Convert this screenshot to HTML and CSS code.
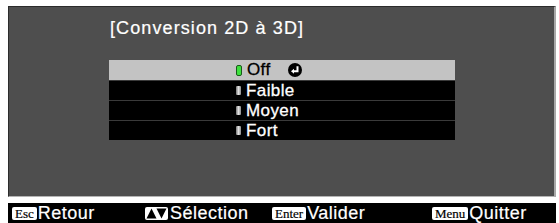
FILE: index.html
```html
<!DOCTYPE html>
<html lang="fr">
<head>
    <meta charset="UTF-8">
    <meta name="viewport" content="width=device-width, initial-scale=1.0">
    <title>Conversion 2D à 3D</title>
    <link rel="stylesheet" href="styles.css">
</head>
<body>
    <div class="screen">
        <div class="panel">
            <h1 class="title">[Conversion 2D à 3D]</h1>
            <ul class="menu">
                <li class="item selected">
                    <span class="led on"></span>Off
                    <svg class="enter-icon" width="14" height="14" viewBox="0 0 14 14">
                        <circle cx="7" cy="7" r="7" fill="#000"/>
                        <path d="M9.5 3.2 V8.3 H5.2" fill="none" stroke="#fff" stroke-width="2"/>
                        <path d="M3 8.3 L6 5.8 V10.8 Z" fill="#fff"/>
                    </svg>
                </li>
                <li class="item"><span class="led"></span>Faible</li>
                <li class="item"><span class="led"></span>Moyen</li>
                <li class="item"><span class="led"></span>Fort</li>
            </ul>
        </div>

        <div class="help-bar">
            <div class="help"><span class="key">Esc</span>Retour</div>
            <div class="help">
                <svg class="key-arrows" width="23" height="13" viewBox="0 0 23 13">
                    <rect width="23" height="13" rx="2" fill="#fff"/>
                    <path d="M1.5 11.5 L6.5 1.5 L11.5 11.5 Z" fill="#000"/>
                    <path d="M11.5 1.5 L21.5 1.5 L16.5 11.5 Z" fill="#000"/>
                </svg>Sélection
            </div>
            <div class="help"><span class="key">Enter</span>Valider</div>
            <div class="help"><span class="key">Menu</span>Quitter</div>
        </div>
    </div>
</body>
</html>
```

FILE: styles.css
```css
body {
    margin: 0;
    background: #fff;
    font-family: "Liberation Sans", Arial, sans-serif;
}

.screen {
    width: 548px;
    padding: 6px 0 0 8px;
}

.panel {
    height: 191px;
    box-sizing: border-box;
    background: #4e4e4e;
    border-top: 1px solid #2c2c2c;
    border-left: 1px solid #2c2c2c;
    border-right: 2px solid #a8a8a8;
    border-bottom: 1px solid #b4b4b4;
    padding: 11px 0 0 101px;
}

.title {
    margin: 0;
    font-size: 18px;
    font-weight: normal;
    line-height: 20px;
    letter-spacing: 1.1px;
    color: #fff;
    -webkit-text-stroke: 0.2px #fff;
}

.menu {
    list-style: none;
    margin: 22px 0 0 -1px;
    padding: 0;
    width: 346px;
}

.item {
    display: flex;
    align-items: center;
    height: 20px;
    box-sizing: border-box;
    padding-left: 127px;
    background: #000;
    color: #fff;
    font-size: 17px;
    line-height: 20px;
    letter-spacing: 0.4px;
    border-top: 1px solid #3a3a3a;
    -webkit-text-stroke: 0.3px #fff;
}

.item.selected {
    background: #c3c3c3;
    color: #000;
    border-top: none;
    -webkit-text-stroke: 0.3px #000;
}

.led {
    width: 5px;
    height: 9px;
    margin-right: 5px;
    border-radius: 1px;
    background: linear-gradient(to right, #777, #e0e0e0 50%, #8a8a8a);
}

.led.on {
    width: 4px;
    height: 9px;
    border: 1px solid #1a5a1a;
    border-radius: 2px;
    background: #3ee03e;
}

.enter-icon {
    margin-left: 17px;
}

.help-bar {
    display: grid;
    grid-template-columns: 133px 127px 160px auto;
    margin-top: 6px;
    width: 548px;
    height: 20px;
    box-sizing: border-box;
    padding-left: 4px;
    background: #000;
    color: #fff;
    font-size: 18px;
    line-height: 20px;
    letter-spacing: 0.5px;
    -webkit-text-stroke: 0.2px #fff;
}

.help {
    display: flex;
    align-items: center;
    white-space: nowrap;
}

.key {
    height: 13px;
    padding: 0 3px;
    margin-right: 1px;
    background: #fff;
    color: #000;
    border-radius: 2px;
    font-family: "Liberation Serif", "Times New Roman", serif;
    font-size: 13px;
    line-height: 14px;
    letter-spacing: 0;
    -webkit-text-stroke: 0.2px #000;
}

.key-arrows {
    margin-right: 2px;
}
```
